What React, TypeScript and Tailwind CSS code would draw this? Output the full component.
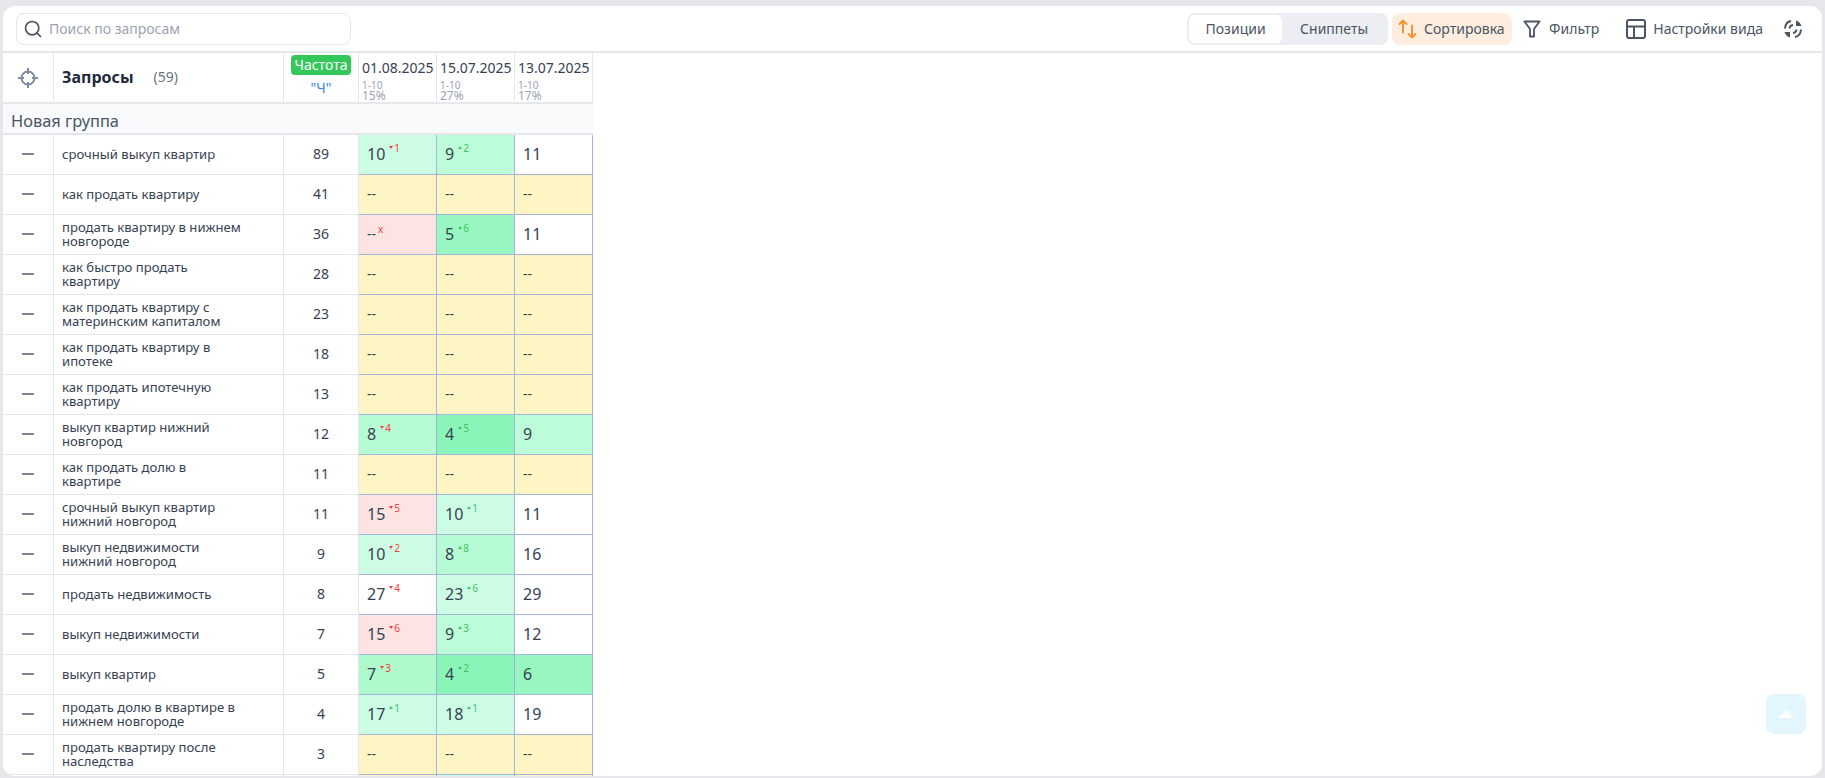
import { Search } from 'lucide-react';

type Cell = { v: string; bg: string; d?: string; up?: boolean };

const W = 'bg-white';
const Y = 'bg-[#fff5c4]';
const R = 'bg-[#fee3e3]';
const G1 = 'bg-[#ccfde4]';
const G2 = 'bg-[#bdfcd9]';
const G3 = 'bg-[#aefacd]';
const G4 = 'bg-[#98f7c1]';
const G5 = 'bg-[#8af5b8]';

const dashes = (): Cell[] => [
  { v: '--', bg: Y },
  { v: '--', bg: Y },
  { v: '--', bg: Y },
];

const ROWS: { q: string; f: number; cells: Cell[] }[] = [
  { q: 'срочный выкуп квартир', f: 89, cells: [{ v: '10', bg: G1, d: '1' }, { v: '9', bg: G2, d: '2', up: true }, { v: '11', bg: W }] },
  { q: 'как продать квартиру', f: 41, cells: dashes() },
  { q: 'продать квартиру в нижнем новгороде', f: 36, cells: [{ v: '--', bg: R, d: 'x' }, { v: '5', bg: G4, d: '6', up: true }, { v: '11', bg: W }] },
  { q: 'как быстро продать квартиру', f: 28, cells: dashes() },
  { q: 'как продать квартиру с материнским капиталом', f: 23, cells: dashes() },
  { q: 'как продать квартиру в ипотеке', f: 18, cells: dashes() },
  { q: 'как продать ипотечную квартиру', f: 13, cells: dashes() },
  { q: 'выкуп квартир нижний новгород', f: 12, cells: [{ v: '8', bg: 'bg-[#b7fbd5]', d: '4' }, { v: '4', bg: G5, d: '5', up: true }, { v: '9', bg: G2 }] },
  { q: 'как продать долю в квартире', f: 11, cells: dashes() },
  { q: 'срочный выкуп квартир нижний новгород', f: 11, cells: [{ v: '15', bg: R, d: '5' }, { v: '10', bg: G1, d: '1', up: true }, { v: '11', bg: W }] },
  { q: 'выкуп недвижимости нижний новгород', f: 9, cells: [{ v: '10', bg: G1, d: '2' }, { v: '8', bg: 'bg-[#b7fbd5]', d: '8', up: true }, { v: '16', bg: W }] },
  { q: 'продать недвижимость', f: 8, cells: [{ v: '27', bg: W, d: '4' }, { v: '23', bg: G1, d: '6', up: true }, { v: '29', bg: W }] },
  { q: 'выкуп недвижимости', f: 7, cells: [{ v: '15', bg: R, d: '6' }, { v: '9', bg: G2, d: '3', up: true }, { v: '12', bg: W }] },
  { q: 'выкуп квартир', f: 5, cells: [{ v: '7', bg: G3, d: '3' }, { v: '4', bg: G5, d: '2', up: true }, { v: '6', bg: G4 }] },
  { q: 'продать долю в квартире в нижнем новгороде', f: 4, cells: [{ v: '17', bg: G1, d: '1', up: true }, { v: '18', bg: G1, d: '1', up: true }, { v: '19', bg: W }] },
  { q: 'продать квартиру после наследства', f: 3, cells: dashes() },
  // row cut off by the bottom of the card, only its top edge shows
  { q: '', f: 0, cells: [{ v: '', bg: Y }, { v: '', bg: G1 }, { v: '', bg: Y }] },
];

const DATES = [
  { date: '01.08.2025', pct: '15%' },
  { date: '15.07.2025', pct: '27%' },
  { date: '13.07.2025', pct: '17%' },
];

const COLS = 'grid grid-cols-[51px_230px_75px_78px_78px_78px] w-[590px]';

function PosCell({ cell }: { cell: Cell }) {
  const dash = cell.v === '--';
  return (
    <div className={`${cell.bg} h-10 border-r border-b border-[#a3b5da] pl-[8px] pb-[2px] flex items-center`}>
      <span className={`${dash ? 'text-[14px]' : 'text-[16px]'} text-[#374151] leading-none`}>{cell.v}</span>
      {cell.d && (
        <span
          className={`flex items-center gap-[1px] ${cell.d === 'x' ? 'ml-[2px] mb-[10px]' : 'ml-[4px] mb-[12px]'} text-[10px] leading-none ${
            cell.d === 'x' || !cell.up ? 'text-[#f63b3b]' : 'text-[#44c168]'
          }`}
        >
          {cell.d !== 'x' && (
            <svg width="4" height="3" viewBox="0 0 4 3" className={cell.up ? '' : 'rotate-180'}>
              <path d="M2 0 4 3H0z" fill="currentColor" />
            </svg>
          )}
          {cell.d}
        </span>
      )}
    </div>
  );
}

function Toolbar() {
  return (
    <div className="h-[47px] shrink-0 flex items-center justify-between pl-[13px] pr-[19px] border-b-2 border-[#e5e7eb]">
      <div className="w-[335px] h-[32px] border border-[#e2e5ea] rounded-lg flex items-center pl-[6px] gap-[6px] text-[14px] text-[#9ca3af]">
        <Search className="w-5 h-5 text-[#4b5563]" strokeWidth={2} />
        Поиск по запросам
      </div>
      <div className="flex items-center text-[14px] text-[#4b5563]">
        <div className="flex h-[32px] rounded-lg bg-[#eceef3] p-[2px]">
          <div className="w-[93px] bg-white rounded-md flex items-center justify-center">Позиции</div>
          <div className="w-[104px] flex items-center justify-center">Сниппеты</div>
        </div>
        <div className="ml-[4px] h-[32px] w-[120px] rounded-lg bg-[#ffeee0] flex items-center pl-[6px]">
          <svg width="19" height="20" viewBox="0 0 19 20" fill="none" stroke="#f59331" strokeWidth="2" strokeLinecap="round" strokeLinejoin="round">
            <path d="M5 1.500v12M1.500 5 5 1.500 8.500 5M14 6.500v12M10.500 15l3.500 3.500 3.500-3.500" />
          </svg>
          <span className="ml-[7px]">Сортировка</span>
        </div>
        <svg width="18" height="18" viewBox="0 0 18 18" fill="none" stroke="#4b5563" strokeWidth="1.8" strokeLinejoin="round" className="ml-[11px]">
          <path d="M1.500 1.500h15L11 9v7.500H7V9z" />
        </svg>
        <span className="ml-[8px]">Фильтр</span>
        <svg width="20" height="20" viewBox="0 0 20 20" fill="none" stroke="#4b5563" strokeWidth="2" className="ml-[27px]">
          <rect x="1" y="1" width="18" height="18" rx="2" />
          <path d="M1 7.500h18M8 7.500V19" />
        </svg>
        <span className="ml-[7px]">Настройки вида</span>
        <svg width="20" height="20" viewBox="0 0 20 20" fill="none" stroke="#4b5563" strokeWidth="2" className="ml-[20px]">
          <path d="M2 9.500C2.300 5.500 4.500 2.500 8 2M6.500 9.500A4 4 0 0 1 10 6" />
          <path d="M13 1.500v5.500h5.500C17.700 4.500 15.700 2.300 13 1.500z" fill="#4b5563" stroke="none" />
          <path d="M18 10.500c-.3 4-2.500 7-6 7.500M13.500 10.500A4 4 0 0 1 10 14" />
          <path d="M7 18.500V13H1.500C2.300 15.500 4.300 17.700 7 18.500z" fill="#4b5563" stroke="none" />
        </svg>
      </div>
    </div>
  );
}

function TableHeader() {
  return (
    <div className={`${COLS} h-[51px] border-b-2 border-[#e5e7eb]`}>
      <div className="border-r border-[#e5e7eb] flex items-center justify-center">
        <svg width="20" height="20" viewBox="0 0 20 20" fill="none" stroke="#7e8ba0" strokeWidth="2">
          <circle cx="10" cy="10" r="6.500" />
          <path d="M10 0v6M10 14v6M0 10h6M14 10h6" />
        </svg>
      </div>
      <div className="border-r border-[#e5e7eb] flex items-center pl-[8px] pb-[2px]">
        <span className="text-[16px] font-bold text-[#1f2937]">Запросы</span>
        <span className="ml-[20px] text-[14px] text-[#6b7280]">(59)</span>
      </div>
      <div className="border-r border-[#e5e7eb] flex flex-col items-center pt-[2px]">
        <span className="h-[20px] w-[60px] rounded bg-[#34c759] text-white text-[14px] leading-[20px] text-center">Частота</span>
        <span className="mt-[3px] text-[14px] leading-[20px] text-[#3b82f6]">"Ч"</span>
      </div>
      {DATES.map((d) => (
        <div key={d.date} className="border-r border-[#e5e7eb] pl-[3px] pt-[5px]">
          <div className="text-[14px] leading-[20px] text-[#374151] whitespace-nowrap">{d.date}</div>
          <div className="mt-[3px] text-[10px] leading-[9px] text-[#9ca3af]">1-10</div>
          <div className="text-[12px] leading-[11px] text-[#9ca3af]">{d.pct}</div>
        </div>
      ))}
    </div>
  );
}

export default function App() {
  return (
    <div className="h-[778px] bg-[#e5e7eb] px-[3px] pt-[6px] pb-[2px] overflow-hidden font-['Noto_Sans',sans-serif]">
      <div className="relative h-full bg-white rounded-xl flex flex-col overflow-hidden">
        <Toolbar />
        <div className="flex-1 overflow-hidden">
          <TableHeader />
          <div className="w-[590px] h-[31px] bg-[#f9fafb] border-b-2 border-[#e5e7eb] pl-[8px] pt-[5px] text-[16.4px] leading-[24px] text-[#4b5563]">
            Новая группа
          </div>
          {ROWS.map((row, idx) => (
            <div key={idx} className={COLS}>
              <div className="h-10 border-r border-b border-[#e5e7eb] pb-[2px] flex items-center justify-center">
                {row.q && <span className="w-[12px] h-[2px] bg-[#7b8494]" />}
              </div>
              <div className="h-10 border-r border-b border-[#e5e7eb] flex items-center pl-[8px] pr-[36px] pb-[2px]">
                <span className="text-[13.1px] leading-[14px] text-[#374151]">{row.q}</span>
              </div>
              <div className="h-10 border-r border-b border-[#e5e7eb] pb-[2px] flex items-center justify-center text-[14px] text-[#374151]">
                {row.f || ''}
              </div>
              {row.cells.map((c, i) => (
                <PosCell key={i} cell={c} />
              ))}
            </div>
          ))}
        </div>
        {/* scroll to top */}
        <div className="absolute right-[16px] bottom-[42px] w-[40px] h-[40px] rounded-lg bg-[#e3f6fe] flex items-center justify-center">
          <svg width="16" height="8" viewBox="0 0 16 8">
            <path d="M8 0 16 8H0z" fill="#fff" />
          </svg>
        </div>
      </div>
    </div>
  );
}
